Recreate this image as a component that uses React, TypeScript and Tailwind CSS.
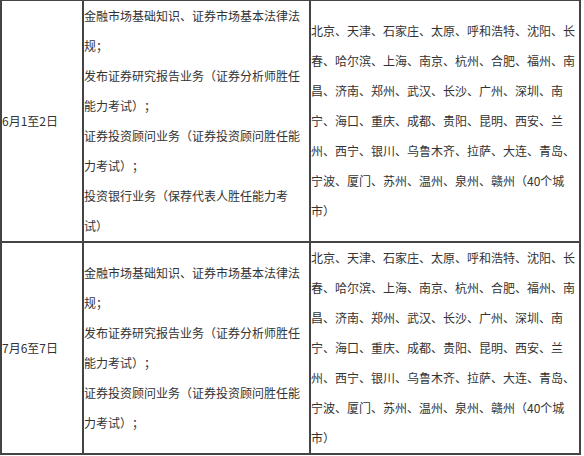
const cities =
  "北京、天津、石家庄、太原、呼和浩特、沈阳、长春、哈尔滨、上海、南京、杭州、合肥、福州、南昌、济南、郑州、武汉、长沙、广州、深圳、南宁、海口、重庆、成都、贵阳、昆明、西安、兰州、西宁、银川、乌鲁木齐、拉萨、大连、青岛、宁波、厦门、苏州、温州、泉州、赣州（40个城市）";

const rows = [
  {
    date: "6月1至2日",
    subjects: [
      "金融市场基础知识、证券市场基本法律法规；",
      "发布证券研究报告业务（证券分析师胜任能力考试）；",
      "证券投资顾问业务（证券投资顾问胜任能力考试）；",
      "投资银行业务（保荐代表人胜任能力考试）",
    ],
  },
  {
    date: "7月6至7日",
    subjects: [
      "金融市场基础知识、证券市场基本法律法规；",
      "发布证券研究报告业务（证券分析师胜任能力考试）；",
      "证券投资顾问业务（证券投资顾问胜任能力考试）；",
    ],
  },
];

export default function App() {
  return (
    <div
      className="w-[584px] h-[456px] overflow-hidden bg-white text-[#333] text-[12px] leading-[30px] [text-spacing-trim:space-all]"
      style={{ fontFamily: '"Noto Sans CJK SC", "Noto Sans", sans-serif' }}
    >
      <table className="-mt-px w-[581px] table-fixed border border-[#444] border-separate border-spacing-0">
        <colgroup>
          <col className="w-[82px]" />
          <col className="w-[227px]" />
          <col className="w-[270px]" />
        </colgroup>
        <tbody>
          {rows.map((row, i) => (
            <tr key={i}>
              <td className="border border-[#444] p-0 align-middle">
                {row.date}
              </td>
              <td className="border border-[#444] p-0 align-middle">
                {row.subjects.map((s, j) => (
                  <p key={j}>{s}</p>
                ))}
              </td>
              <td className="border border-[#444] p-0 align-middle">
                <p>{cities}</p>
              </td>
            </tr>
          ))}
        </tbody>
      </table>
    </div>
  );
}
